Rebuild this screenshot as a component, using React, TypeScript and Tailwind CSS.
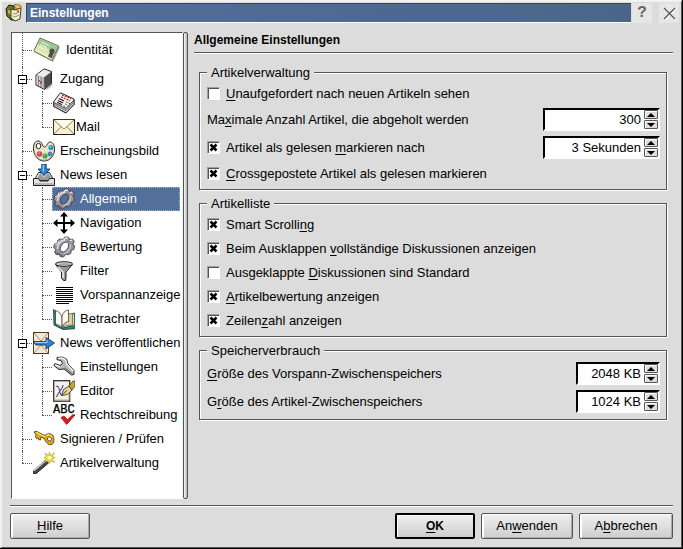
import { useState, type ReactNode } from "react";

/* ---------- icons ---------- */

const Svg = ({ w = 22, h = 22, children }: { w?: number; h?: number; children: ReactNode }) => (
  <svg width={w} height={h} viewBox={`0 0 ${w} ${h}`} className="block shrink-0" aria-hidden="true">
    {children}
  </svg>
);

const AppIcon = () => (
  <Svg w={18} h={18}>
    <path d="M1 5l3-4 5 1v14H6L2 12z" fill="#6e7420" stroke="#1c1c08" />
    <path d="M3 6l3 1v4l-3-2z" fill="#c8b868" />
    <path d="M6 5l4 1 6-2-1 11-5 2-4-3z" fill="#f3eed4" stroke="#3d3a1c" />
    <path d="M9 1l3-1 4 2v2l-5 1z" fill="#f0c840" stroke="#6b4c10" strokeWidth=".7" />
    <path d="M8 9l2 1 4-2M8 12l2 1 4-2" stroke="#7c9a50" fill="none" />
    <path d="M11 7l3-1v3z" fill="#d14b38" />
  </Svg>
);

const IdIcon = () => (
  <Svg w={28} h={26}>
    <path d="M7.500 2.500L27 10.500l-7 14.500L1 15z" fill="#555" opacity=".5" />
    <path d="M7 1l18.500 8-6.500 14.500L.8 14z" fill="#d9e6b4" stroke="#5c6a4e" />
    <path d="M7.300 1.800L24.800 9.300l-2.500 5.500L4.500 6.800z" fill="#9cc894" />
    <path d="M2.500 11.500L20 20l-1.200 2.800L1.500 13.800z" fill="#f0eeb8" />
    <path d="M8 5l8 3.500M7 7.500l7 3M6 10l7 3" stroke="#eef6e2" />
    <circle cx="19" cy="14.200" r="2.600" fill="#4b4f48" />
    <path d="M15 19.500l1.500-3.500h4l-1.500 5.500z" fill="#4b4f48" />
  </Svg>
);

const ServerIcon = () => (
  <Svg>
    <path d="M3 7l8-6 7.500 2.500v12l-7 6L3 17z" fill="#9c9c9c" stroke="#1e1e1e" />
    <path d="M3.500 7l7.600-5.400 7 2.400-7 5.500z" fill="#ececec" />
    <path d="M11 9.500l7.200-5.500v11.300L11.500 21z" fill="#4c4c4c" />
    <path d="M3.500 7.300l7.500 2.400V20.700L3.500 16.700z" fill="#b8b8b8" />
    <path d="M5.500 8v9.500M8 9v10" stroke="#868686" />
    <path d="M4.200 8v8.500M6.700 8.600v9.500" stroke="#e4e4e4" strokeWidth=".8" />
    <path d="M7 13.500h2v2H7z" fill="#e02020" />
    <path d="M6 12h1v1.500H6z" fill="#3048c0" />
    <path d="M12.500 21.500l7-6v2l-5 4z" fill="#b9b9b9" />
  </Svg>
);

const NewsIcon = () => (
  <Svg>
    <path d="M7.500.8L21 7v5.500L13 21 .8 14.500v-5z" fill="#f4f4f4" stroke="#222" />
    <path d="M13 16.500l8-8.500v4.500L13 21 .8 14.500v-4z" fill="#c4c4c4" stroke="#222" strokeWidth=".8" />
    <path d="M1 12.500l12 6 8-8.500" stroke="#666" fill="none" strokeWidth=".8" />
    <path d="M9 2.800l9 4M8 4.800l9 4" stroke="#cc2424" strokeWidth="1.300" strokeDasharray="2 1" />
    <path d="M6 6.500l5 2.500M5 8.500l5 2.500M4 10.300l5 2.500" stroke="#222" strokeWidth="1.200" />
    <path d="M13 9.800l4 2M12 11.800l3.500 1.800M10.500 13.800l3 1.500" stroke="#555" strokeDasharray="2 1" />
  </Svg>
);

const MailIcon = () => (
  <Svg>
    <rect x=".5" y="3.500" width="21" height="15" fill="#f7efd0" stroke="#3a382c" />
    <path d="M1 18l7.500-7.500M21 18l-7.500-7.500" stroke="#8c845e" />
    <path d="M1 4l10 9L21 4" fill="#fffbe8" stroke="#8c845e" />
    <path d="M1 18.500h20.500V4" stroke="#222" fill="none" />
  </Svg>
);

const PaletteIcon = () => (
  <Svg>
    <path d="M4.500 1C1.500 1.500.2 5 .6 10c.6 6.500 5 11 10.400 11S21 17 21.500 10c.2-4-1-7.500-4-8-3-.5-3.500 5-6 5S9.500.5 4.500 1z" fill="#ebe4cb" stroke="#2b2920" />
    <path d="M2 14c1.500 4 5 6 9 6s7.500-2 9-6" stroke="#a69d7c" fill="none" />
    <ellipse cx="5.500" cy="6" rx="2.300" ry="2.700" fill="#fff" stroke="#2b2920" />
    <circle cx="18" cy="7.500" r="2.600" fill="#2a8fc0" />
    <circle cx="6.500" cy="14" r="2.800" fill="#d04858" />
    <circle cx="12" cy="16" r="2.500" fill="#35a04a" />
    <circle cx="17" cy="14" r="2.500" fill="#4a8ab0" />
    <circle cx="17.500" cy="6.800" r=".8" fill="#b8dcf5" />
    <circle cx="6" cy="13.200" r=".8" fill="#f6b4b4" />
    <circle cx="11.500" cy="15.300" r=".7" fill="#a8e4b0" />
  </Svg>
);

const InboxIcon = () => (
  <Svg>
    <path d="M5.500 8.500h11l4.500 8H1z" fill="#c9c9c9" stroke="#333" />
    <path d="M2.500 16L7 9l4 5 4-5 4.500 7z" fill="#9a9a9a" />
    <path d="M6.500 9L3 15.500" stroke="#f0f0f0" />
    <path d="M.5 14.500h5l1.500 2.500h8l1.500-2.500h5v7H.5z" fill="#e2e2e2" stroke="#222" />
    <path d="M1.500 20h19" stroke="#8d8d8d" />
    <path d="M8.800 0h4.400v5H17L11 11.500 5 5h3.800z" fill="#2c86cf" stroke="#0d3c6e" strokeWidth=".9" />
    <path d="M10.300.8v7" stroke="#9fd4f7" strokeWidth="1.200" />
  </Svg>
);

const GearIcon = () => (
  <Svg>
    <path
      fillRule="evenodd"
      d="M7 3l3 .5L12 1l3.500.2L16.500 3.500l3-.5 1.800 2.500-1.500 2.500 1.700 2-.7 3.500-2.600.7-.4 3-2.800 1.700-2-1.200L10.500 21l-3.300-.3-.7-2.500-3 .6L1.500 16 3 13.500.7 11.500 1.500 8l2.800-.7L4.500 4.500zM13 6C10 6.500 7.500 9.500 7.300 12.800c-.1 2.200 1 3.400 3 3 3-.6 5.200-3.500 5.300-6.600C15.700 7 14.800 5.700 13 6z"
      fill="#96939c"
      stroke="#453c49"
      strokeWidth=".9"
    />
    <path d="M7.500 4l2.800.5L12.500 2l2.500.2M2.300 8.500l2.800-.7.500-3M17 4.500l2.200-.3" stroke="#f2f2f5" strokeWidth="1.200" fill="none" />
    <path d="M4.500 13C4.500 8 8 4.800 12.500 4.200" stroke="#d6d5dc" strokeWidth="1.800" fill="none" />
    <path d="M17.500 8c.5 4.500-2.500 9-7 9.800" stroke="#b9b7c0" strokeWidth="1.800" fill="none" />
    <path d="M2.500 15.500l1 2.200 3-.7.800 2.600 2.700.3" stroke="#6a606f" fill="none" />
  </Svg>
);

const MoveIcon = () => (
  <Svg>
    <path d="M11 0l4 4.500h-3V10h5.500V7L22 11l-4.500 4v-3H12v5.500h3L11 22l-4-4.500h3V12H4.500v3L0 11l4.500-4v3H10V4.500H7z" fill="#000" />
  </Svg>
);

const FunnelIcon = () => (
  <Svg>
    <path d="M2.500 4.500L8.500 12v6l2 2.500h2l.5-2.500v-6l6.500-7.500z" fill="#9a9a9a" stroke="#222" />
    <path d="M5 7l5 5v6" stroke="#efefef" strokeWidth="1.500" fill="none" />
    <ellipse cx="11" cy="4" rx="8.500" ry="2.300" fill="#d4d4d4" stroke="#222" />
    <ellipse cx="11.500" cy="4.300" rx="5.500" ry="1" fill="#a4a4a4" />
  </Svg>
);

const LinesIcon = () => (
  <Svg>
    <path d="M3 3.500h17M3 5.500h17M3 7.500h17M3 9.500h17M3 11.500h17M3 13.500h17M3 15.500h17M3 17.500h17M3 19.500h13" stroke="#000" />
  </Svg>
);

const BookIcon = () => (
  <Svg>
    <path d="M.5 1.500L3 3v14l6 3 12.500-2.500v3.300L10 21.500 1 17z" fill="#2a8a80" stroke="#0e3a36" strokeWidth=".8" />
    <path d="M19.500 5.500h2v13" stroke="#1d6f66" strokeWidth="1.400" fill="none" />
    <path d="M2.500 2.500C6 3.500 8.500 6 9 10v10c-1.500-2.500-4-3.500-6.500-4z" fill="#fdfaf0" stroke="#444" strokeWidth=".8" />
    <path d="M14 6l5.500-.5v12c-4-.5-7 0-10 2 1-3 2-5 4.500-6z" fill="#e0cc9c" stroke="#6b5a34" strokeWidth=".8" />
    <path d="M9 19.500V9c.5-4 3-6.500 6.500-7v11.500c-3 0-5.500 3-6.500 6z" fill="#fffdf4" stroke="#444" strokeWidth=".8" />
  </Svg>
);

const SendIcon = () => (
  <Svg>
    <rect x=".5" y=".5" width="15" height="21" fill="#f8e8d2" stroke="#4b3c2c" />
    <path d="M1 1l7 8 7-8M1 21l7-8 7 8" stroke="#b08f6d" fill="none" />
    <path d="M0 9.500h13V5.500L21.500 11 13 17v-4H3z" fill="#2f83cb" stroke="#0f3c6c" strokeWidth=".9" />
    <path d="M2 10.500h12V8" stroke="#a1d4f5" fill="none" />
  </Svg>
);

const WrenchIcon = () => (
  <Svg>
    <path d="M4 1.500l5-.5 4.500 2 1.500 5 6 6.500v4l-2.500.5-7.500-6-5 .5L.8 9.500l1.200-2 5 2L9.500 7.500 8 4.500l-4-.8z" fill="#b8b8b8" stroke="#262626" />
    <path d="M5 2.300l4-.3 3.500 1.800L14 8.500l6.300 6.700M2 8.800l5 2" stroke="#f4f4f4" strokeWidth="1.300" fill="none" />
    <path d="M11.500 11.800l7.500 6" stroke="#7a7a7a" strokeWidth="1.300" />
  </Svg>
);

const EditorIcon = () => (
  <Svg>
    <rect x=".7" y=".7" width="16" height="20.500" fill="#f5f1e8" stroke="#333" strokeWidth="1.300" />
    <path d="M2 20h14V8" stroke="#b9a777" fill="none" />
    <path d="M3 6.500c2-1 3 1 3.500 4s1.500 6 4 4M10 5C10 9 5 12 3.500 17" stroke="#4444a0" fill="none" strokeWidth="1.100" />
    <path d="M8.500 15.500l2-6L16 6l3 4-4.500 4.500z" fill="#e0d49a" stroke="#494020" strokeWidth=".9" />
    <path d="M16 6l4-5h2v5l-3 4z" fill="#c5a83c" stroke="#5c4a14" strokeWidth=".9" />
    <path d="M9 15l5-4.500" stroke="#494020" strokeWidth=".9" />
  </Svg>
);

const SpellIcon = () => (
  <Svg>
    <text x="0" y="9" fontFamily="'Liberation Mono', monospace" fontSize="12" fill="#000" stroke="#000" strokeWidth=".3">ABC</text>
    <path d="M8 13.500l3-1.500 3.500 3.500L20 10.500l2 .5-7 8-1.500 1.500z" fill="#dc1c1c" stroke="#8c0c0c" strokeWidth=".7" />
  </Svg>
);

const KeyIcon = () => (
  <Svg>
    <path
      fillRule="evenodd"
      d="M1 4l2-.8 9 4.300c2-2 5-2.500 7.500-.5 2 2.500 2 8-.5 9.500-3 1-6.500-1.500-7.500-6L8 9l-.5 3-2-.5-.5-1.500-1.500.5-1-2L3 6.500zM15.500 9c-1.500.5-1.500 3.500.5 4s2.500-1 2.500-2-1.500-2.500-3-2z"
      fill="#dca91c"
      stroke="#5a3e08"
      strokeWidth=".9"
    />
    <path d="M3 4.200l9 4.600M13.500 7.800c2-1.500 4-1 5.300 1" stroke="#ffe780" strokeWidth="1.200" fill="none" />
  </Svg>
);

const WandIcon = () => (
  <Svg>
    <path d="M.3 19L12.500 8l3 3L3 21.700H.3z" fill="#484848" stroke="#111" strokeWidth=".8" />
    <path d="M1 18.800L12.800 8.500" stroke="#d4d4d4" strokeWidth="1.400" />
    <path d="M16.500 0l.8 3.500L21.500.8 19 4.500l3 1L19 7l2.500 3.500-4-2-1 3-1-3-4 1.500L13.500 6.700 11 5.500l2.500-1L12 1.200l3.700 2.300z" fill="#f6e83a" stroke="#a8961a" strokeWidth=".6" />
    <circle cx="16.500" cy="5.700" r="1.800" fill="#fffde0" />
  </Svg>
);

/* ---------- tree ---------- */

type Node = { label: string; icon: ReactNode; gap?: string; tall?: boolean; children?: Node[] };

const tree: Node[] = [
  { label: "Identität", icon: <IdIcon />, tall: true },
  {
    label: "Zugang",
    icon: <ServerIcon />,
    children: [
      { label: "News", icon: <NewsIcon /> },
      { label: "Mail", icon: <MailIcon />, gap: "gap-px" },
    ],
  },
  { label: "Erscheinungsbild", icon: <PaletteIcon /> },
  {
    label: "News lesen",
    icon: <InboxIcon />,
    children: [
      { label: "Allgemein", icon: <GearIcon /> },
      { label: "Navigation", icon: <MoveIcon /> },
      { label: "Bewertung", icon: <GearIcon /> },
      { label: "Filter", icon: <FunnelIcon /> },
      { label: "Vorspannanzeige", icon: <LinesIcon /> },
      { label: "Betrachter", icon: <BookIcon /> },
    ],
  },
  {
    label: "News veröffentlichen",
    icon: <SendIcon />,
    children: [
      { label: "Einstellungen", icon: <WrenchIcon /> },
      { label: "Editor", icon: <EditorIcon /> },
      { label: "Rechtschreibung", icon: <SpellIcon /> },
    ],
  },
  { label: "Signieren / Prüfen", icon: <KeyIcon /> },
  { label: "Artikelverwaltung", icon: <WandIcon /> },
];

/* One 20px column of the dotted connector lines. */
function Guide({ branch, last }: { branch?: boolean; last?: boolean }) {
  return (
    <span className="flex w-5 shrink-0 flex-col self-stretch pl-[10px]">
      <span className="flex-1 border-l border-dotted border-[#555]" />
      <span
        className={`flex-1 border-dotted border-[#555] ${branch ? "border-t" : ""} ${last ? "" : "border-l"}`}
      />
    </span>
  );
}

function TreeRow({ node, depth, last, selected, onSelect }: {
  node: Node;
  depth: number;
  last: boolean;
  selected: string;
  onSelect: (label: string) => void;
}) {
  const active = depth === 1 && node.label === selected;
  return (
    <li>
      <div className={`relative flex items-center ${node.tall ? "h-[34px]" : "h-6"}`}>
        {depth === 1 && <Guide />}
        <Guide branch last={last} />
        {node.children && (
          <button
            aria-label={`${node.label} einklappen`}
            className="absolute left-[6px] top-2 flex h-[9px] w-[9px] items-center justify-center border border-black bg-white"
          >
            <span className="h-px w-[5px] bg-black" />
          </button>
        )}
        <button
          onClick={() => onSelect(node.label)}
          className={`flex h-full flex-1 items-center whitespace-nowrap pl-px text-left ${node.gap ?? "gap-[5px]"} ${
            active ? "bg-[#536f9b] text-white outline-1 -outline-offset-1 outline-dotted outline-[#aab9d0]" : ""
          }`}
        >
          {node.icon}
          {node.label}
        </button>
      </div>
      {node.children && (
        <ul>
          {node.children.map((child, i) => (
            <TreeRow
              key={child.label}
              node={child}
              depth={1}
              last={i === node.children!.length - 1}
              selected={selected}
              onSelect={onSelect}
            />
          ))}
        </ul>
      )}
    </li>
  );
}

/* ---------- form parts ---------- */

/* Underlines the accelerator letter that follows an ampersand. */
function Mnemonic({ text }: { text: string }) {
  const at = text.indexOf("&");
  if (at < 0) return <>{text}</>;
  return (
    <span className="whitespace-pre">
      {text.slice(0, at)}
      <span className="underline underline-offset-2">{text[at + 1]}</span>
      {text.slice(at + 2)}
    </span>
  );
}

function Check({ text, checked = false }: { text: string; checked?: boolean }) {
  const [on, setOn] = useState(checked);
  return (
    <label className="flex h-[19px] items-center gap-[6px]">
      <span className="grid">
        <input
          type="checkbox"
          checked={on}
          onChange={() => setOn(!on)}
          className="col-start-1 row-start-1 h-[13px] w-[13px] appearance-none border border-b-white border-l-[#a0a0a0] border-r-white border-t-[#a0a0a0] bg-white shadow-[inset_1px_1px_0_#555]"
        />
        {on && (
          <svg width="13" height="13" viewBox="0 0 13 13" className="pointer-events-none col-start-1 row-start-1" aria-hidden="true">
            <path d="M3.500 3.500l6 6M9.500 3.500l-6 6" stroke="#000" strokeWidth="2.500" />
          </svg>
        )}
      </span>
      <Mnemonic text={text} />
    </label>
  );
}

function Spin({ id, value, wide }: { id: string; value: string; wide?: boolean }) {
  const step =
    "flex h-[9px] w-[14px] items-center justify-center rounded-[1px] border border-[#555] bg-[#dcdcdc] shadow-[inset_1px_1px_0_white]";
  return (
    <div
      className={`flex h-[23px] items-center border-2 border-b-white border-l-black border-r-white border-t-black bg-white ${
        wide ? "w-[117px]" : "w-[84px]"
      }`}
    >
      <input id={id} defaultValue={value} className="min-w-0 flex-1 bg-transparent pr-[3px] text-right outline-none" />
      <span className="flex flex-col gap-px">
        <button aria-label="Erhöhen" className={step}>
          <svg width="8" height="4" viewBox="0 0 8 4"><path d="M4 0l4 4H0z" /></svg>
        </button>
        <button aria-label="Verringern" className={step}>
          <svg width="8" height="4" viewBox="0 0 8 4"><path d="M4 4l4-4H0z" /></svg>
        </button>
      </span>
    </div>
  );
}

function Group({ title, children }: { title: string; children: ReactNode }) {
  return (
    <fieldset className="min-w-0 border border-[#555] pb-[6px] pl-[7px] pr-[6px] shadow-[1px_1px_0_white,inset_1px_1px_0_white]">
      <legend className="bg-[#dcdcdc] px-1 leading-[15px]">{title}</legend>
      <div className="flex flex-col gap-[5px] pt-1">{children}</div>
    </fieldset>
  );
}

const Rule = () => <hr className="h-[2px] border-0 border-t border-[#555] bg-white" />;

function PushButton({ text, width, primary }: { text: string; width: string; primary?: boolean }) {
  return (
    <button
      className={`h-[26px] rounded-[2px] bg-linear-to-b from-[#f0f0f0] to-[#cecece] ${width} ${
        primary
          ? "border-2 border-black text-xs font-bold shadow-[inset_1px_1px_0_white]"
          : "border border-[#555] shadow-[inset_2px_1px_0_white,inset_-1px_-1px_0_#a8a8a8]"
      }`}
    >
      <Mnemonic text={text} />
    </button>
  );
}

/* ---------- window ---------- */

export default function App() {
  const [page, setPage] = useState("Allgemein");

  return (
    <div className="flex min-h-screen flex-col border-b border-r border-black bg-[#dcdcdc] font-['Liberation_Sans',Arial,sans-serif] text-[13px] leading-4 text-black">
      <div className="flex flex-1 flex-col border-b border-l-2 border-r border-t-2 border-b-[#555] border-l-[#f2f2f2] border-r-[#555] border-t-[#f2f2f2]">
        <header className="flex h-[21px] items-stretch pt-px">
          <div className="flex w-6 items-center justify-center">
            <AppIcon />
          </div>
          <h1 className="flex flex-1 items-center border-b border-l border-t border-b-white border-l-[#444] border-t-[#444] bg-linear-to-r from-[#536f9b] to-[#4b658a] pl-[3px] text-xs font-bold text-white">
            Einstellungen
          </h1>
          <button aria-label="Hilfe zum Fenster" className="ml-px flex w-5 items-center justify-center bg-[#e6e6e6] font-['Liberation_Mono',monospace] text-base font-bold text-[#666]">
            ?
          </button>
          <button aria-label="Schließen" className="ml-[7px] mr-[2px] flex w-5 items-center justify-center bg-[#e6e6e6]">
            <svg width="13" height="13" viewBox="0 0 13 13" aria-hidden="true">
              <path d="M2 2l11 11M13 2L2 13" stroke="#fff" strokeWidth="1.200" />
              <path d="M1 1l11 11M12 1L1 12" stroke="#555" strokeWidth="1.300" />
            </svg>
          </button>
        </header>

        <div className="flex flex-1 flex-col pb-2 pl-2 pr-2 pt-[9px]">
          <div className="flex flex-1 pl-px">
            <nav
              aria-label="Kategorien"
              className="w-[172px] shrink-0 border border-b-white border-l-[#555] border-r-[#f0f0f0] border-t-[#555] bg-white pr-[2px]"
            >
              <ul>
                {tree.map((node, i) => (
                  <TreeRow
                    key={node.label}
                    node={node}
                    depth={0}
                    last={i === tree.length - 1}
                    selected={page}
                    onSelect={setPage}
                  />
                ))}
              </ul>
            </nav>
            <div className="w-[5px] shrink-0 rounded-[2px] border border-[#555] bg-linear-to-r from-white to-[#b0b0b0]" />

            <main className="ml-[6px] flex min-w-0 flex-1 flex-col">
              <h2 className="pb-1 text-xs font-bold leading-4">Allgemeine Einstellungen</h2>
              <Rule />
              <div className="flex flex-col gap-[6px] pl-[5px] pr-[6px] pt-[11px]">
                <Group title="Artikelverwaltung">
                  <Check text="&Unaufgefordert nach neuen Artikeln sehen" />
                  <div className="flex items-center justify-between">
                    <label htmlFor="max"><Mnemonic text="Ma&ximale Anzahl Artikel, die abgeholt werden" /></label>
                    <Spin id="max" value="300" wide />
                  </div>
                  <div className="flex items-center justify-between">
                    <Check text="Artikel als gelesen &markieren nach" checked />
                    <Spin id="delay" value="3 Sekunden" wide />
                  </div>
                  <Check text="&Crossgepostete Artikel als gelesen markieren" checked />
                </Group>
                <Group title="Artikelliste">
                  <Check text="Smart Scrolli&ng" checked />
                  <Check text="Beim Ausklappen &vollständige Diskussionen anzeigen" checked />
                  <Check text="Ausgeklappte &Diskussionen sind Standard" />
                  <Check text="&Artikelbewertung anzeigen" checked />
                  <Check text="Zeilen&zahl anzeigen" checked />
                </Group>
                <Group title="Speicherverbrauch">
                  <div className="flex items-center justify-between">
                    <label htmlFor="head"><Mnemonic text="&Größe des Vorspann-Zwischenspeichers" /></label>
                    <Spin id="head" value="2048 KB" />
                  </div>
                  <div className="flex items-center justify-between">
                    <label htmlFor="body"><Mnemonic text="G&röße des Artikel-Zwischenspeichers" /></label>
                    <Spin id="body" value="1024 KB" />
                  </div>
                </Group>
              </div>
            </main>
          </div>

          <div className="pb-[6px] pt-[6px]">
            <Rule />
          </div>
          <footer className="flex gap-[6px]">
            <PushButton text="&Hilfe" width="w-20 mr-auto" />
            <PushButton text="&OK" width="w-20" primary />
            <PushButton text="An&wenden" width="w-[92px]" />
            <PushButton text="A&bbrechen" width="w-[94px]" />
          </footer>
        </div>
      </div>
    </div>
  );
}
